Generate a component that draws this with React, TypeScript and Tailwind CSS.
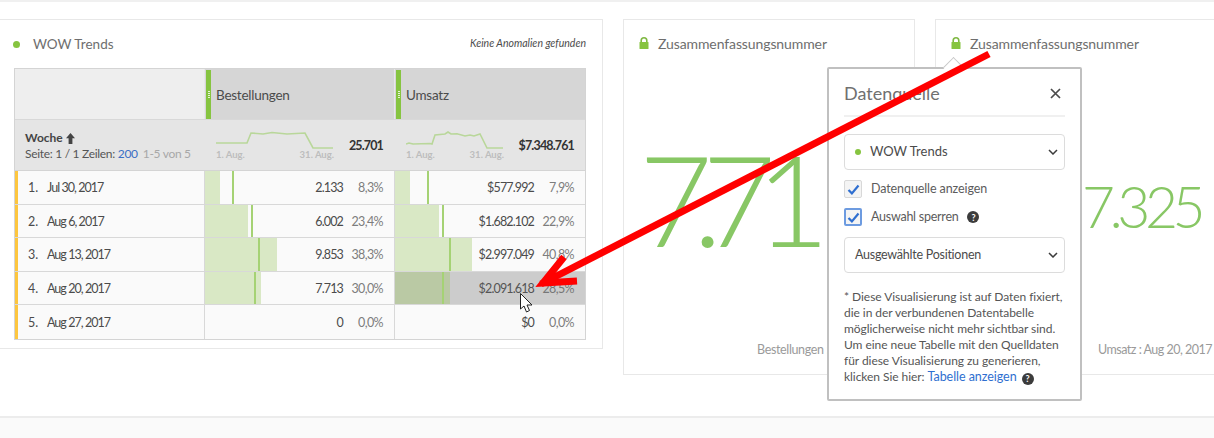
import React from "react";

const font = { fontFamily: '"Lato", "Open Sans", sans-serif' };

type Cell = { bar: number; mark: number; value: string; pct: string; selected?: boolean };
type Row = { n: number; date: string; a: Cell; b: Cell };

const rows: Row[] = [
  { n: 1, date: "Jul 30, 2017", a: { bar: 15, mark: 27, value: "2.133", pct: "8,3%" }, b: { bar: 15, mark: 32, value: "$577.992", pct: "7,9%" } },
  { n: 2, date: "Aug 6, 2017", a: { bar: 43, mark: 46, value: "6.002", pct: "23,4%" }, b: { bar: 44, mark: 47, value: "$1.682.102", pct: "22,9%" } },
  { n: 3, date: "Aug 13, 2017", a: { bar: 72, mark: 53, value: "9.853", pct: "38,3%" }, b: { bar: 77, mark: 54, value: "$2.997.049", pct: "40,8%" } },
  { n: 4, date: "Aug 20, 2017", a: { bar: 56, mark: 49, value: "7.713", pct: "30,0%" }, b: { bar: 55, mark: 47, value: "$2.091.618", pct: "28,5%", selected: true } },
  { n: 5, date: "Aug 27, 2017", a: { bar: 0, mark: -1, value: "0", pct: "0,0%" }, b: { bar: 0, mark: -1, value: "$0", pct: "0,0%" } },
];

function Lock() {
  return (
    <svg width="10" height="12" viewBox="0 0 10 12" className="shrink-0">
      <path d="M2.2 5.5V3.6a2.8 2.8 0 0 1 5.6 0v1.9" fill="none" stroke="#7fb842" strokeWidth="1.6" />
      <rect x="0.5" y="5" width="9" height="7" rx="0.6" fill="#86c440" />
    </svg>
  );
}

function Help() {
  return (
    <span className="inline-flex h-[12px] w-[12px] items-center justify-center rounded-full bg-[#3c3c3c] text-[9px] font-bold leading-none text-white">?</span>
  );
}

function Chevron() {
  return (
    <svg width="10" height="6" viewBox="0 0 10 6">
      <path d="M1 1l4 4 4-4" fill="none" stroke="#3c3c3c" strokeWidth="1.5" />
    </svg>
  );
}

function Check({ focus }: { focus?: boolean }) {
  return (
    <span className={focus ? "flex h-[18px] w-[18px] items-center justify-center rounded-[2px] border-2 border-[#6d9be0] bg-[#f4f4f4]" : "flex h-[18px] w-[18px] items-center justify-center rounded-[2px] border border-[#d8d8d8] bg-[#f4f4f4]"}>
      <svg width="13" height="11" viewBox="0 0 13 11">
        <path d="M1.5 6l3.4 3.4L11.5 1.5" fill="none" stroke="#2f6fd0" strokeWidth="2.2" />
      </svg>
    </span>
  );
}

function Spark({ points, labelW }: { points: string; labelW: number }) {
  return (
    <div className="flex flex-col" style={{ width: labelW }}>
      <svg width={labelW} height="20" viewBox={`0 0 ${labelW} 20`}>
        <polyline points={points} fill="none" stroke="#b9d79a" strokeWidth="1.6" />
      </svg>
      <div className="-mt-[2px] flex justify-between text-[9.5px] font-bold leading-[12px] text-[#bdbdbd]">
        <span>1. Aug.</span>
        <span>31. Aug.</span>
      </div>
    </div>
  );
}

function DataCell({ c }: { c: Cell }) {
  return (
    <div className={c.selected ? "relative flex items-center justify-end border-l border-[#d8d8d8] bg-[#cccccc] pt-[2px]" : "relative flex items-center justify-end border-l border-[#d8d8d8] pt-[2px]"}>
      {c.bar > 0 && (
        <div className={c.selected ? "absolute inset-y-0 left-0 bg-[#bac9a4]" : "absolute inset-y-0 left-0 bg-[#d9e8c5]"} style={{ width: c.bar }} />
      )}
      {c.mark >= 0 && <div className="absolute inset-y-0 w-[2px] bg-[#a5d274]" style={{ left: c.mark }} />}
      <span className={c.selected ? "relative text-[12.5px] tracking-[-0.85px] text-[#555]" : "relative text-[12.5px] tracking-[-0.85px] text-[#4b4b4b]"}>{c.value}</span>
      <span className={c.selected ? "relative w-[51px] pr-[11px] text-right text-[12.5px] tracking-[-0.6px] text-[#777]" : "relative w-[51px] pr-[11px] text-right text-[12.5px] tracking-[-0.6px] text-[#7d7d7d]"}>{c.pct}</span>
    </div>
  );
}

function ColHead({ title }: { title: string }) {
  return (
    <div className="flex items-stretch border-l border-[#e8e8e8] bg-[#d6d6d6] pt-[1px]">
      <div className="ml-[1px] flex w-[5px] flex-col items-center justify-center gap-[1px] bg-[#86c440]">
        {[0, 1, 2, 3].map((i) => (
          <span key={i} className="h-[1px] w-[2px] bg-white/80" />
        ))}
      </div>
      <span className="flex items-center pl-[5px] pt-[1px] text-[13.5px] tracking-[-0.25px] text-[#4b4b4b]">{title}</span>
    </div>
  );
}

function Table() {
  return (
    <div className="mt-[15px] w-[572px] border border-[#d4d4d4] bg-[#fafafa]">
      <div className="grid h-[51px] grid-cols-[189px_190px_191px] border-b border-[#d8d8d8]">
        <div className="bg-[#eeeeee]" />
        <ColHead title="Bestellungen" />
        <ColHead title="Umsatz" />
      </div>
      <div className="grid h-[51px] grid-cols-[189px_190px_191px] border-b border-[#d4d4d4] bg-[#e5e5e5]">
        <div className="flex flex-col justify-center pl-[10px] pt-[2px] text-[12px] leading-[16px]">
          <div className="flex items-center gap-[3px] font-bold text-[#444]">
            Woche
            <svg width="9" height="11" viewBox="0 0 9 11">
              <path d="M4.5 0L9 5.2H6.4V11H2.6V5.2H0z" fill="#444" />
            </svg>
          </div>
          <div className="whitespace-nowrap tracking-[-0.3px] text-[#555]">
            Seite: 1 / 1 Zeilen: <span className="text-[#3a6fc4]">200</span>
            <span className="ml-[5px] text-[#a8a8a8]">1-5 von 5</span>
          </div>
        </div>
        <div className="flex items-center pl-[12px] pt-[2px]">
          <Spark labelW={118} points="0,12 31,12 35,2 47,3 56,1.5 71,3 89,2 97,17 117,17" />
          <span className="ml-auto pr-[11px] text-[12.5px] font-bold tracking-[-0.85px] text-[#333]">25.701</span>
        </div>
        <div className="flex items-center pl-[12px] pt-[2px]">
          <Spark labelW={98} points="0,13 3,12 7,13 24,12.5 26,13 29,4 39,3 42,1 45,3 51,2.7 59,5 64,4 68,5 74,3 81,17 97,17" />
          <span className="ml-auto pr-[11px] text-[12.5px] font-bold tracking-[-0.85px] text-[#333]">$7.348.761</span>
        </div>
      </div>
      {rows.map((r) => (
        <div key={r.n} className="grid h-[33.6px] grid-cols-[189px_190px_191px] border-b border-[#d8d8d8] last:border-b-0">
          <div className="flex items-center border-l-[3px] border-[#fdc63f] pt-[2px] text-[12.5px] text-[#4b4b4b]">
            <span className="box-content w-[19px] pl-[10px]">{r.n}.</span>
            <span className="tracking-[-0.95px]">{r.date}</span>
          </div>
          <DataCell c={r.a} />
          <DataCell c={r.b} />
        </div>
      ))}
    </div>
  );
}

function Popover() {
  return (
    <div className="absolute left-[827px] top-[67px] h-[334px] w-[255px] rounded-[2px] border-2 border-[#c0c0c0] bg-white px-[15px]">
      <div className="absolute -top-[9px] left-[117px] h-[15px] w-[15px] rotate-45 border-l border-t border-[#c8c8c8] bg-white" />
      <div className="relative flex h-[48px] items-center justify-between border-b-2 border-[#f0f0f0] pt-[2px]">
        <span className="text-[18px] text-[#707070]">Datenquelle</span>
        <svg width="11" height="11" viewBox="0 0 11 11" className="mr-[4px]">
          <path d="M1 1l9 9M10 1l-9 9" stroke="#4b4b4b" strokeWidth="1.7" />
        </svg>
      </div>
      <div className="mt-[17px] flex h-[36px] items-center rounded-[4px] border border-[#dcdcdc] pl-[10px] pr-[6px] text-[13px] text-[#4b4b4b]">
        <span className="mr-[9px] h-[6px] w-[6px] rounded-full bg-[#86c440]" />
        WOW Trends
        <span className="ml-auto"><Chevron /></span>
      </div>
      <div className="mt-[10px] flex items-center gap-[9px] text-[12.5px] leading-[18px] tracking-[-0.1px] text-[#5c5c5c]">
        <Check />
        Datenquelle anzeigen
      </div>
      <div className="mt-[10px] flex items-center gap-[9px] text-[12.5px] leading-[18px] tracking-[-0.1px] text-[#5c5c5c]">
        <Check focus />
        <span className="tracking-[-0.25px]">Auswahl sperren</span>
        <span className="flex"><Help /></span>
      </div>
      <div className="mt-[11px] flex h-[36px] items-center rounded-[4px] border border-[#dcdcdc] pl-[10px] pr-[6px] text-[12.5px] tracking-[-0.25px] text-[#4b4b4b]">
        Ausgewählte Positionen
        <span className="ml-auto"><Chevron /></span>
      </div>
      <p className="mt-[16px] whitespace-nowrap text-[12px] leading-[16px] tracking-[-0.05px] text-[#555]">
        * Diese Visualisierung ist auf Daten fixiert,
        <br />
        die in der verbundenen Datentabelle
        <br />
        möglicherweise nicht mehr sichtbar sind.
        <br />
        Um eine neue Tabelle mit den Quelldaten
        <br />
        für diese Visualisierung zu generieren,
        <br />
        klicken Sie hier: <span className="text-[12.5px] text-[#2f6fd0]">Tabelle anzeigen</span>{" "}
        <span className="ml-[2px] inline-flex align-[-1px]"><Help /></span>
      </p>
    </div>
  );
}

export default function App() {
  return (
    <div className="relative flex h-[438px] w-[1214px] flex-col overflow-hidden bg-white" style={font}>
      <div className="h-[2px] shrink-0 bg-[#f0f0f0]" />
      <main className="flex min-h-0 flex-1 items-start pt-[17px]">
        <section className="-ml-[1px] h-[330px] w-[604px] shrink-0 border border-[#e8e8e8] px-[14px] pt-[15px]">
          <div className="flex h-[18px] items-center">
            <span className="-ml-[1px] h-[7px] w-[7px] rounded-full bg-[#86c440]" />
            <span className="ml-[13px] text-[13.5px] text-[#6e6e6e]">WOW Trends</span>
            <span className="ml-auto mr-[2px] text-[10.5px] italic text-[#4b4b4b]">Keine Anomalien gefunden</span>
          </div>
          <Table />
        </section>
        <section className="ml-[20px] flex h-[356px] w-[292px] shrink-0 flex-col border border-[#e8e8e8] px-[15px] pt-[14px]">
          <div className="flex h-[18px] items-center gap-[9px] text-[14px] tracking-[-0.1px] text-[#6e6e6e]"><Lock />Zusammenfassungsnummer</div>
          <div className="mt-[83px] whitespace-nowrap text-[127px] font-light leading-[127px] tracking-[-20px] text-[#88c765]">7.71<span className="ml-[24px]">3</span></div>
          <div className="mt-auto mb-[14px] ml-[118px] whitespace-nowrap text-[12.5px] tracking-[-0.35px] text-[#9a9a9a]">Bestellungen : Aug 20, 2017</div>
        </section>
        <section className="ml-[20px] flex h-[356px] w-[290px] shrink-0 flex-col border border-[#e8e8e8] pl-[15px] pt-[14px]">
          <div className="flex h-[18px] items-center gap-[9px] text-[14px] tracking-[-0.1px] text-[#6e6e6e]"><Lock />Zusammenfassungsnummer</div>
          <div className="mt-[126px] ml-[131px] whitespace-nowrap text-[57px] font-light leading-[57px] tracking-[-5.5px] text-[#88c765]">7.325</div>
          <div className="mt-auto mb-[14px] ml-[147px] whitespace-nowrap text-[12.5px] tracking-[-0.5px] text-[#9a9a9a]">Umsatz : Aug 20, 2017</div>
        </section>
      </main>
      <div className="h-[22px] shrink-0 border-t-2 border-[#ececec] bg-[#fafafa]" />
      <Popover />
      <svg className="absolute left-0 top-0" width="1214" height="438" viewBox="0 0 1214 438">
        <path d="M989 54L541 284" stroke="#ff0000" strokeWidth="7" fill="none" />
        <path d="M564 257L543 283L577 281" stroke="#ff0000" strokeWidth="7" fill="none" />
        <path d="M520.5 293.5V309L524 306L526.5 312L529.5 310.5L527 305H532z" fill="#ffffff" stroke="#222" strokeWidth="1" />
      </svg>
    </div>
  );
}
